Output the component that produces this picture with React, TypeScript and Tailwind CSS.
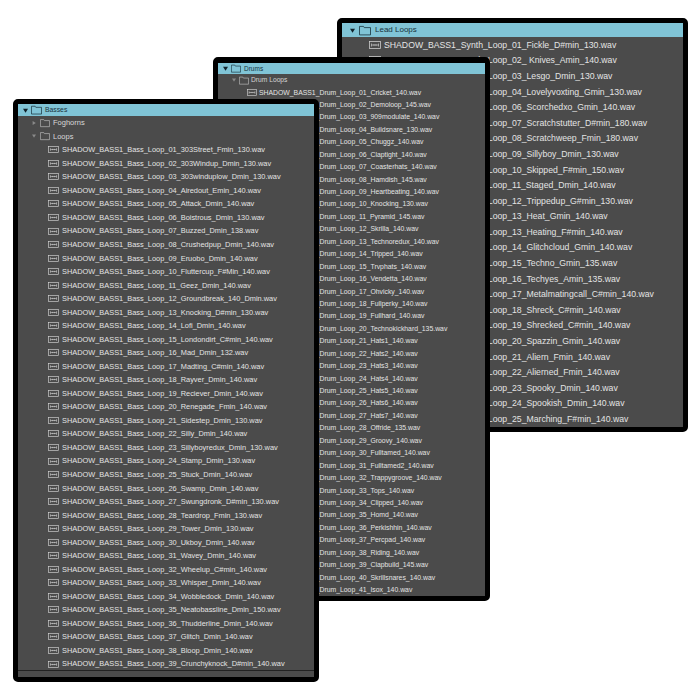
const lead = [
  "Synth_Loop_01_Fickle_D#min_130", "Synth_Loop_02_ Knives_Amin_140", "Synth_Loop_03_Lesgo_Dmin_130", "Synth_Loop_04_Lovelyvoxting_Gmin_130", "Synth_Loop_06_Scorchedxo_Gmin_140",
  "Synth_Loop_07_Scratchstutter_D#min_180", "Synth_Loop_08_Scratchweep_Fmin_180", "Synth_Loop_09_Sillyboy_Dmin_130", "Synth_Loop_10_Skipped_F#min_150", "Synth_Loop_11_Staged_Dmin_140",
  "Synth_Loop_12_Trippedup_G#min_130", "Synth_Loop_13_Heat_Gmin_140", "Synth_Loop_13_Heating_F#min_140", "Synth_Loop_14_Glitchcloud_Gmin_140", "Synth_Loop_15_Techno_Gmin_135",
  "Synth_Loop_16_Techyes_Amin_135", "Synth_Loop_17_Metalmatingcall_C#min_140", "Synth_Loop_18_Shreck_C#min_140", "Synth_Loop_19_Shrecked_C#min_140", "Synth_Loop_20_Spazzin_Gmin_140",
  "Synth_Loop_21_Aliern_Fmin_140", "Synth_Loop_22_Alierned_Fmin_140", "Synth_Loop_23_Spooky_Dmin_140", "Synth_Loop_24_Spookish_Dmin_140", "Synth_Loop_25_Marching_F#min_140",
];
const drums = [
  "01_Cricket_140", "02_Demoloop_145", "03_909modulate_140", "04_Buildsnare_130", "05_Chuggz_140", "06_Claptight_140", "07_Coasterhats_140", "08_Hamdish_145", "09_Heartbeating_140", "10_Knocking_130",
  "11_Pyramid_145", "12_Skrilla_140", "13_Technoredux_140", "14_Tripped_140", "15_Trvphats_140", "16_Vendetta_140", "17_Ohvicky_140", "18_Fullperky_140", "19_Fullhard_140", "20_Technokickhard_135",
  "21_Hats1_140", "22_Hats2_140", "23_Hats3_140", "24_Hats4_140", "25_Hats5_140", "26_Hats6_140", "27_Hats7_140", "28_Offride_135", "29_Groovy_140", "30_Fulltamed_140",
  "31_Fulltamed2_140", "32_Trappygroove_140", "33_Tops_140", "34_Clipped_140", "35_Homd_140", "36_Perkishhin_140", "37_Percpad_140", "38_Riding_140", "39_Clapbuild_145", "40_Skrillsnares_140", "41_Isox_140",
];
const basses = [
  "01_303Street_Fmin_130", "02_303Windup_Dmin_130", "03_303winduplow_Dmin_130", "04_Airedout_Emin_140", "05_Attack_Dmin_140", "06_Boistrous_Dmin_130", "07_Buzzed_Dmin_138", "08_Crushedpup_Dmin_140",
  "09_Eruobo_Dmin_140", "10_Fluttercup_F#Min_140", "11_Geez_Dmin_140", "12_Groundbreak_140_Dmin", "13_Knocking_D#min_130", "14_Lofi_Dmin_140", "15_Londondirt_C#min_140", "16_Mad_Dmin_132",
  "17_Madting_C#min_140", "18_Rayver_Dmin_140", "19_Reciever_Dmin_140", "20_Renegade_Fmin_140", "21_Sidestep_Dmin_130", "22_Silly_Dmin_140", "23_Sillyboyredux_Dmin_130", "24_Stamp_Dmin_130",
  "25_Stuck_Dmin_140", "26_Swamp_Dmin_140", "27_Swungdronk_D#min_130", "28_Teardrop_Fmin_130", "29_Tower_Dmin_130", "30_Ukboy_Dmin_140", "31_Wavey_Dmin_140", "32_Wheelup_C#min_140",
  "33_Whisper_Dmin_140", "34_Wobbledock_Dmin_140", "35_Neatobassline_Dmin_150", "36_Thudderline_Dmin_140", "37_Glitch_Dmin_140", "38_Bloop_Dmin_140", "39_Crunchyknock_D#min_140",
];

const font = "font-['Liberation_Sans',Arial,sans-serif]";

function Triangle({ down, className }: { down: boolean; className: string }) {
  return (
    <svg viewBox="0 0 10 10" className={className}>
      <path d={down ? "M0 1.5H10L5 9.5Z" : "M1.5 0V10L9.5 5Z"} fill="currentColor" />
    </svg>
  );
}

function Folder({ className }: { className: string }) {
  return (
    <svg viewBox="0 0 24 20" className={className} fill="none" stroke="currentColor" strokeWidth="1.6">
      <path d="M1 18.8V1.8H9L10.5 4.2H23V18.8Z" />
    </svg>
  );
}

function Wave({ className }: { className: string }) {
  return (
    <svg viewBox="0 0 24 16" className={className} fill="none" stroke="currentColor" strokeWidth="1.5">
      <rect x="0.8" y="0.8" width="22.4" height="14.4" />
      <path d="M5 5V11M10 6.5V9.5M14 6.5V9.5M19 5V11M5 8H19" strokeWidth="1.3" />
    </svg>
  );
}

function FileRows({ names, rowClass, iconClass, textClass }: { names: string[]; rowClass: string; iconClass: string; textClass: string }) {
  return (
    <>
      {names.map((n) => (
        <div key={n} className={`flex items-center ${rowClass}`}>
          <Wave className={`shrink-0 text-[#d4d4d4] ${iconClass}`} />
          <span className={`whitespace-nowrap text-[#e4e4e4] ${textClass}`}>{n}.wav</span>
        </div>
      ))}
    </>
  );
}

export default function App() {
  return (
    <div className={`relative h-[700px] w-[700px] overflow-hidden bg-white ${font}`}>
      {/* Lead Loops */}
      <div className="absolute left-[337px] top-[18px] flex h-[414px] w-[351px] flex-col rounded-[5px] border-[5px] border-black bg-[#4b4b4b]">
        <div className="flex h-[14px] shrink-0 items-center bg-[#80c4d6] pl-[8px] text-[#17323c]">
          <Triangle down className="h-[5px] w-[5px] shrink-0 text-[#10222a]" />
          <Folder className="ml-[4px] h-[11px] w-[12px] shrink-0 text-[#17323c]" />
          <span className="ml-[4px] text-[8px]">Lead Loops</span>
        </div>
        <FileRows
          names={lead.map((n) => "SHADOW_BASS1_" + n)}
          rowClass="h-[15.6px] shrink-0 pl-[27px]"
          iconClass="h-[8px] w-[12px] mr-[3px]"
          textClass="text-[8.7px] pt-[1px]"
        />
      </div>

      {/* Drums */}
      <div className="absolute left-[213px] top-[57px] flex h-[544px] w-[277px] flex-col rounded-[5px] border-[5px] border-black border-t-[6px] bg-[#4b4b4b]">
        <div className="flex h-[11px] shrink-0 items-center bg-[#80c4d6] pl-[5px] text-[#17323c]">
          <Triangle down className="h-[5px] w-[5px] shrink-0 text-[#10222a]" />
          <Folder className="ml-[3px] h-[9px] w-[10px] shrink-0 text-[#17323c]" />
          <span className="ml-[3px] text-[6.5px]">Drums</span>
        </div>
        <div className="flex h-[12.44px] shrink-0 items-center pl-[14px] text-[#d4d4d4]">
          <Triangle down className="h-[4px] w-[4px] shrink-0 text-[#8a8a8a]" />
          <Folder className="ml-[3px] h-[9px] w-[10px] shrink-0 text-[#bdbdbd]" />
          <span className="ml-[2px] text-[6.7px]">Drum Loops</span>
        </div>
        <FileRows
          names={drums.map((n) => "SHADOW_BASS1_Drum_Loop_" + n)}
          rowClass="h-[12.44px] shrink-0 pl-[29px]"
          iconClass="h-[7px] w-[10px] mr-[2px]"
          textClass="text-[6.85px]"
        />
      </div>

      {/* Basses */}
      <div className="absolute left-[13px] top-[99px] flex h-[583px] w-[306px] flex-col rounded-[5px] border-[5px] border-black bg-[#4b4b4b]">
        <div className="flex h-[12px] shrink-0 items-center bg-[#80c4d6] pl-[5px] text-[#17323c]">
          <Triangle down className="h-[5px] w-[5px] shrink-0 text-[#10222a]" />
          <Folder className="ml-[3px] h-[10px] w-[11px] shrink-0 text-[#17323c]" />
          <span className="ml-[3px] text-[6.8px]">Basses</span>
        </div>
        <div className="flex h-[13.54px] shrink-0 items-center pl-[14px] text-[#d8d8d8]">
          <Triangle down={false} className="h-[4px] w-[4px] shrink-0 text-[#8a8a8a]" />
          <Folder className="ml-[4px] h-[10px] w-[10px] shrink-0 text-[#bdbdbd]" />
          <span className="ml-[3px] text-[7.5px]">Foghorns</span>
        </div>
        <div className="flex h-[13.54px] shrink-0 items-center pl-[14px] text-[#d8d8d8]">
          <Triangle down className="h-[4px] w-[4px] shrink-0 text-[#8a8a8a]" />
          <Folder className="ml-[4px] h-[10px] w-[10px] shrink-0 text-[#bdbdbd]" />
          <span className="ml-[3px] text-[7.5px]">Loops</span>
        </div>
        <FileRows
          names={basses.map((n) => "SHADOW_BASS1_Bass_Loop_" + n)}
          rowClass="h-[13.54px] shrink-0 pl-[30px]"
          iconClass="h-[7px] w-[11px] mr-[3px]"
          textClass="text-[7.4px]"
        />
        <div className="mt-[-1px] min-h-0 flex-1 border-t border-[#222222]" />
      </div>
    </div>
  );
}
